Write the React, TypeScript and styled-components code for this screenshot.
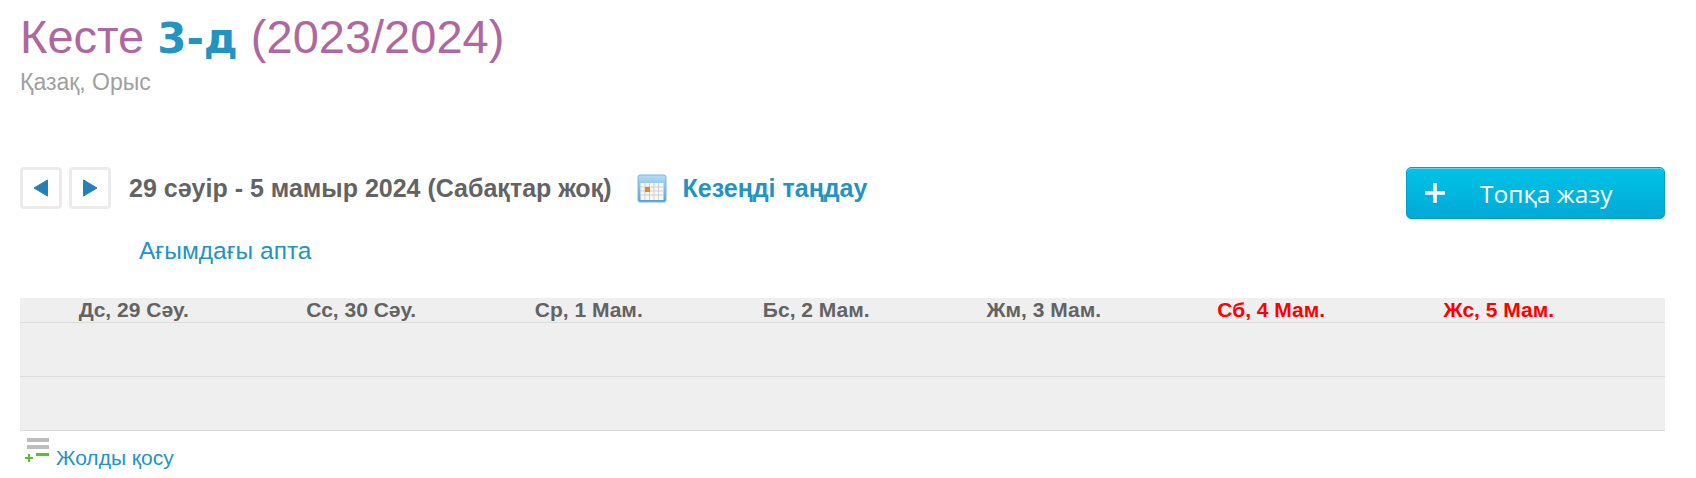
import styled, { createGlobalStyle } from "styled-components";

const GlobalStyle = createGlobalStyle`
    html, body {
        margin: 0;
        background: #fff;
        font-family: "Liberation Sans", Arial, sans-serif;
    }
`

const days = [
    {label: "Дс, 29 Сәу."},
    {label: "Сс, 30 Сәу."},
    {label: "Ср, 1 Мам."},
    {label: "Бс, 2 Мам."},
    {label: "Жм, 3 Мам."},
    {label: "Сб, 4 Мам.", weekend: true},
    {label: "Жс, 5 Мам.", weekend: true},
];

const App = () => {
    return (
        <Page>
            <GlobalStyle/>
            <Title>Кесте <ClassName>3-д</ClassName> (2023/2024)</Title>
            <Languages>Қазақ, Орыс</Languages>

            <Toolbar>
                <NavButton aria-label="previous">
                    <svg width="20" height="20" viewBox="0 0 20 20"><path d="M16.5 2 L16.5 18 L3 10 Z" fill="#2580b3" stroke="#2580b3" strokeLinejoin="round"/></svg>
                </NavButton>
                <NavButton aria-label="next">
                    <svg width="20" height="20" viewBox="0 0 20 20"><path d="M3.5 2 L3.5 18 L17 10 Z" fill="#2580b3" stroke="#2580b3" strokeLinejoin="round"/></svg>
                </NavButton>
                <DateRange>29 сәуір - 5 мамыр 2024 (Сабақтар жоқ)</DateRange>
                <CalendarWrap><CalendarIcon/></CalendarWrap>
                <PeriodLink>Кезеңді таңдау</PeriodLink>
                <WriteButton>
                    <svg width="20" height="20" viewBox="0 0 20 20"><path d="M8.2 0h3.6v8.2H20v3.6h-8.2V20H8.2v-8.2H0V8.2h8.2z" fill="#fff"/></svg>
                    <span>Топқа жазу</span>
                </WriteButton>
            </Toolbar>

            <CurrentWeek>Ағымдағы апта</CurrentWeek>

            <Schedule>
                <HeaderRow>
                    {days.map(d => <DayCell key={d.label} $weekend={d.weekend}>{d.label}</DayCell>)}
                </HeaderRow>
                <EmptyRow/>
                <EmptyRow/>
            </Schedule>

            <AddRow>
                <AddIcon/>
                <AddLink>Жолды қосу</AddLink>
            </AddRow>
        </Page>
    );
};

const CalendarIcon = () => (
    <svg width="30" height="30" viewBox="0 0 30 30">
        <defs>
            <linearGradient id="calTop" x1="0" y1="0" x2="0" y2="1">
                <stop offset="0" stopColor="#b5dcf5"/>
                <stop offset="1" stopColor="#4f9fd8"/>
            </linearGradient>
        </defs>
        <rect x="1" y="1" width="28" height="27" rx="2" fill="url(#calTop)" stroke="#7fb6dc"/>
        <rect x="3.5" y="9" width="23" height="17" fill="#f8f8f6"/>
        <path d="M3.5 13h23M3.5 17h23M3.5 21h23M8 9v17M12.5 9v17M17 9v17M21.5 9v17" stroke="#cfcfcf" strokeWidth="1"/>
        <rect x="8" y="13" width="5" height="5" fill="#e8861a"/>
    </svg>
);

const AddIcon = () => (
    <svg width="26" height="26" viewBox="0 0 26 26">
        <rect x="3" y="0" width="22" height="4" fill="#bdbdbd"/>
        <rect x="3" y="7" width="22" height="4" fill="#bdbdbd"/>
        <rect x="12" y="15" width="13" height="3" fill="#5cc02e"/>
        <path d="M4 16h2v3h3v2H6v3H4v-3H1v-2h3z" fill="#5cc02e"/>
    </svg>
);

const Page = styled.div`
    box-sizing: border-box;
    width: 1696px;
    height: 478px;
    padding: 12px 31px 0 20px;
    overflow: hidden;
`

const Title = styled.h1`
    margin: 0;
    font-size: 47px;
    line-height: 50px;
    font-weight: 400;
    color: #ae689f;
`

const ClassName = styled.b`
    color: #2394c2;
    font-family: "DejaVu Sans", sans-serif;
    font-size: 42px;
    font-weight: 700;
`

const Languages = styled.div`
    margin-top: 6px;
    font-size: 23px;
    line-height: 24px;
    color: #a0a0a0;
`

const Toolbar = styled.div`
    display: flex;
    align-items: flex-start;
    margin-top: 73px;
`

const NavButton = styled.button`
    box-sizing: border-box;
    width: 42px;
    height: 42px;
    margin-right: 7px;
    padding: 0;
    display: flex;
    align-items: center;
    justify-content: center;
    background: #fff;
    border: 3px solid #ebebeb;
    border-radius: 4px;
`

const DateRange = styled.div`
    margin: 0 26px 0 11px;
    font-size: 25px;
    line-height: 42px;
    font-weight: 700;
    color: #636363;
    white-space: nowrap;
`

const CalendarWrap = styled.div`
    display: flex;
    margin-top: 7px;
`

const PeriodLink = styled.a`
    margin-left: 15px;
    font-size: 25px;
    line-height: 42px;
    font-weight: 700;
    color: #2394c2;
    white-space: nowrap;
`

const WriteButton = styled.button`
    box-sizing: border-box;
    width: 259px;
    height: 52px;
    margin-left: auto;
    padding: 0 0 0 18px;
    display: flex;
    align-items: center;
    gap: 35px;
    color: #fff;
    font-family: "Open Sans", sans-serif;
    font-size: 24.5px;
    font-weight: 500;
    background: linear-gradient(#00c3e8, #00aad6);
    border: 1px solid #0a9cc4;
    border-radius: 5px;
    box-shadow: inset 0 1px 0 #5fd8f0;
`

const CurrentWeek = styled.a`
    display: block;
    margin: 17px 0 0 119px;
    font-size: 24.5px;
    line-height: 30px;
    color: #2394c2;
`

const Schedule = styled.div`
    margin-top: 32px;
    background: #efefef;
`

const HeaderRow = styled.div`
    display: grid;
    grid-template-columns: repeat(7, 227.5px);
    height: 24px;
    border-bottom: 1px solid #dcdcdc;
`

const DayCell = styled.div<{ $weekend?: boolean }>`
    font-size: 21px;
    line-height: 24px;
    font-weight: 700;
    text-align: center;
    color: ${props => props.$weekend ? "#ff0000" : "#636363"};
`

const EmptyRow = styled.div`
    height: 53px;
    border-bottom: 1px solid #dcdcdc;
`

const AddRow = styled.div`
    display: flex;
    align-items: flex-end;
    gap: 6px;
    margin-top: 7px;
    padding-left: 4px;
`

const AddLink = styled.a`
    font-size: 21px;
    line-height: 24px;
    color: #2394c2;
    margin-bottom: -6px;
`

export default App;
